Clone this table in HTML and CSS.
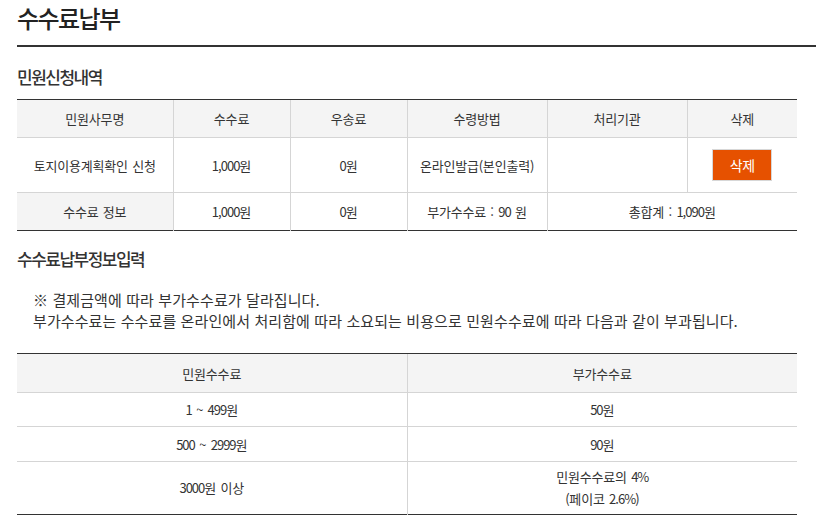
FILE: index.html
```html
<!DOCTYPE html>
<html lang="ko">
<head>
<meta charset="utf-8">
<title>수수료납부</title>
<link rel="stylesheet" href="styles.css">
</head>
<body>
<div class="page">
  <h1 class="title">수수료납부</h1>

  <h2 class="sec sec-first">민원신청내역</h2>
  <table class="tbl tbl-apply">
    <colgroup>
      <col style="width:156px"><col style="width:117px"><col style="width:117px"><col style="width:140px"><col style="width:140px"><col style="width:110px">
    </colgroup>
    <thead>
      <tr class="r-head">
        <th>민원사무명</th><th>수수료</th><th>우송료</th><th>수령방법</th><th>처리기관</th><th>삭제</th>
      </tr>
    </thead>
    <tbody>
      <tr class="r-item">
        <td>토지이용계획확인 신청</td><td><span class="num">1,000</span>원</td><td><span class="num">0</span>원</td><td>온라인발급(본인출력)</td><td></td>
        <td><button class="btn-del" type="button">삭제</button></td>
      </tr>
      <tr class="r-sum">
        <th>수수료 정보</th><td><span class="num">1,000</span>원</td><td><span class="num">0</span>원</td><td>부가수수료 : <span class="num">90</span> 원</td><td colspan="2">총합계 : <span class="num">1,090</span>원</td>
      </tr>
    </tbody>
  </table>

  <h2 class="sec sec-second">수수료납부정보입력</h2>
  <div class="notes">
    <p>※ 결제금액에 따라 부가수수료가 달라집니다.</p>
    <p>부가수수료는 수수료를 온라인에서 처리함에 따라 소요되는 비용으로 민원수수료에 따라 다음과 같이 부과됩니다.</p>
  </div>

  <table class="tbl tbl-fee">
    <colgroup><col style="width:390px"><col style="width:390px"></colgroup>
    <thead>
      <tr class="f-head"><th>민원수수료</th><th>부가수수료</th></tr>
    </thead>
    <tbody>
      <tr class="f-row"><td><span class="num">1</span> ~ <span class="num">499</span>원</td><td><span class="num">50</span>원</td></tr>
      <tr class="f-row2"><td><span class="num">500</span> ~ <span class="num">2999</span>원</td><td><span class="num">90</span>원</td></tr>
      <tr class="f-tall"><td><span class="num">3000</span>원 이상</td><td>민원수수료의 <span class="num">4%</span><br>(페이코 <span class="num">2.6%</span>)</td></tr>
    </tbody>
  </table>
</div>
</body>
</html>
```

FILE: styles.css
```css
html, body {
  margin: 0;
  padding: 0;
  background: #fff;
}
body {
  font-family: "Noto Sans CJK KR", "Noto Sans", sans-serif;
  color: #333;
}
.page {
  padding-left: 17px;
}
.title {
  margin: 0;
  font-size: 24px;
  font-weight: 500;
  letter-spacing: -1.6px;
  line-height: 36px;
  padding-bottom: 9px;
  border-bottom: 2px solid #333;
  color: #222;
}
.sec {
  margin: 0;
  font-size: 17px;
  font-weight: 500;
  letter-spacing: -1.5px;
  line-height: 24px;
  color: #333;
}
.sec-first {
  padding-top: 18px;
  padding-bottom: 10px;
}
.sec-second {
  padding-top: 16px;
}
.tbl {
  width: 780px;
  border-collapse: collapse;
  table-layout: fixed;
  border-top: 1px solid #333;
  border-bottom: 1px solid #333;
  font-size: 13px;
  letter-spacing: -0.2px;
  word-spacing: 1px;
  color: #333;
}
.tbl .num {
  letter-spacing: -1px;
}
.tbl th, .tbl td {
  padding: 0;
  text-align: center;
  vertical-align: middle;
  font-weight: 400;
  border-left: 1px solid #d5d5d5;
  border-top: 1px solid #d5d5d5;
}
.tbl th:first-child, .tbl td:first-child {
  border-left: none;
}
.tbl thead th {
  background: #f4f4f4;
  border-top: 1px solid #333;
}
.r-head th { height: 37px; }
.r-item td { height: 54px; }
.r-sum th, .r-sum td { height: 37px; }
.r-sum th { background: #f4f4f4; }
.btn-del {
  width: 60px;
  height: 32px;
  margin: 0;
  padding: 0;
  border: 1px solid #d7d7d7;
  background: #e65100;
  color: #fff;
  font-family: "Noto Sans CJK KR", sans-serif;
  font-size: 14px;
  letter-spacing: -0.5px;
  cursor: pointer;
  display: inline-block;
  vertical-align: middle;
}
.notes {
  padding: 18px 0 0 16px;
  font-size: 15px;
  line-height: 21px;
  letter-spacing: 0.1px;
  color: #333;
}
.notes p {
  margin: 0;
}
.tbl-fee {
  margin-top: 22px;
}
.f-head th { height: 38px; }
.f-row td { height: 33px; }
.f-row2 td { height: 34px; }
.f-tall td { height: 52px; line-height: 22px; }
```
